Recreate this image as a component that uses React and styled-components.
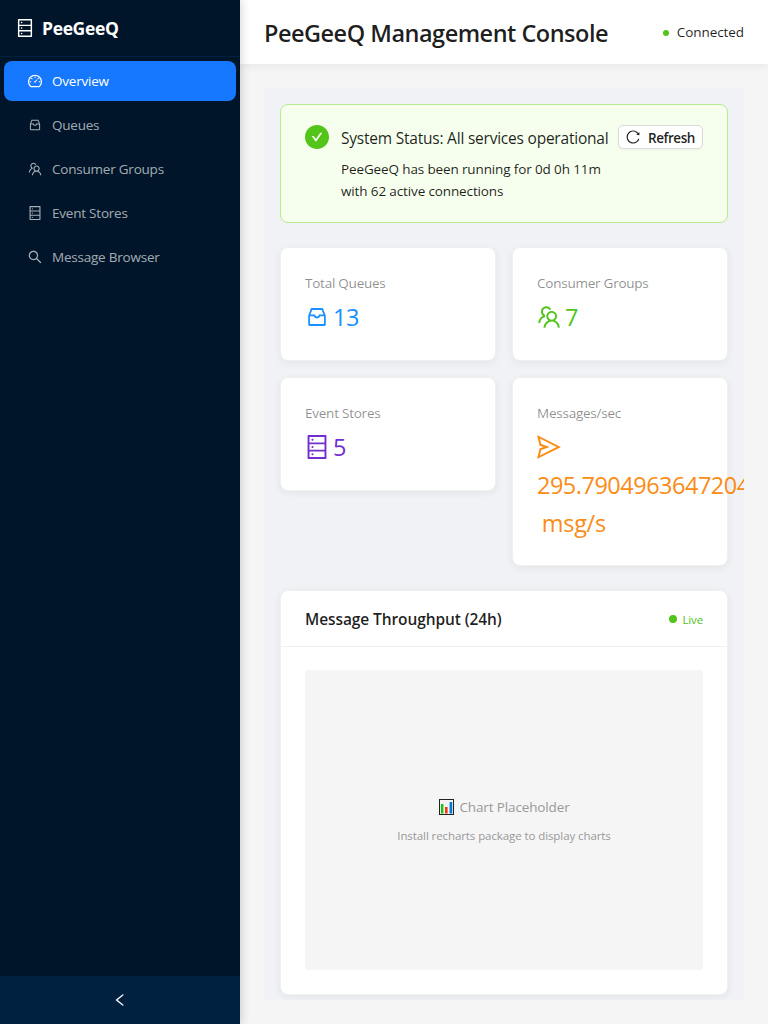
import React from "react";
import styled, { createGlobalStyle } from "styled-components";
import {
  AiOutlineDashboard,
  AiOutlineInbox,
  AiOutlineTeam,
  AiOutlineDatabase,
  AiOutlineSearch,
  AiOutlineSend,
  AiOutlineReload,
  AiOutlineLeft,
  AiFillCheckCircle,
} from "react-icons/ai";

const GlobalStyle = createGlobalStyle`
  *, *::before, *::after { box-sizing: border-box; }
  html, body { margin: 0; height: 100%; overflow: hidden; }
  body {
    font-family: "Segoe UI", "Open Sans", "Noto Sans", sans-serif;
    font-size: 13.5px;
    line-height: 22px;
    letter-spacing: -0.13px;
    color: rgba(0, 0, 0, 0.88);
    background: #f5f5f5;
  }
  svg { display: block; flex: none; }
`;

const Layout = styled.div`
  display: flex;
  width: 100%;
  height: 100vh;
  overflow: hidden;
`;

const Sider = styled.aside`
  display: flex;
  flex-direction: column;
  flex: 0 0 240px;
  background: #001529;
  box-shadow: 2px 0 8px rgba(0, 0, 0, 0.15);
  position: relative;
  z-index: 2;
`;

const Brand = styled.div`
  display: flex;
  align-items: center;
  gap: 8px;
  height: 57px;
  padding: 0 16px;
  border-bottom: 1px solid #002140;
  color: #fff;
  font-size: 17.5px;
  font-weight: 700;
  letter-spacing: -0.35px;
`;

const Menu = styled.nav`
  display: flex;
  flex: 1;
  flex-direction: column;
  gap: 4px;
  padding: 4px;
`;

const MenuItem = styled.a`
  display: flex;
  align-items: center;
  gap: 10px;
  height: 40px;
  padding: 0 24px;
  border-radius: 8px;
  color: ${(p) => (p.$active ? "#fff" : "rgba(255, 255, 255, 0.65)")};
  background: ${(p) => (p.$active ? "#1677ff" : "transparent")};
  letter-spacing: -0.22px;
`;

const Trigger = styled.div`
  display: flex;
  align-items: center;
  justify-content: center;
  height: 48px;
  background: #002140;
  color: #fff;
`;

const Main = styled.div`
  display: flex;
  flex: 1;
  flex-direction: column;
  min-width: 0;
`;

const Header = styled.header`
  display: flex;
  align-items: center;
  justify-content: space-between;
  flex: 0 0 64px;
  padding: 0 24px;
  background: #fff;
  box-shadow: 0 2px 8px rgba(0, 0, 0, 0.06);
  white-space: nowrap;
`;

const PageTitle = styled.h1`
  margin: 2px 0 0;
  font-size: 23.5px;
  line-height: 32px;
  font-weight: 600;
  letter-spacing: -0.5px;
`;

const Connection = styled.div`
  display: flex;
  align-items: center;
  gap: 8px;
  letter-spacing: -0.08px;
`;

const Dot = styled.span`
  width: ${(p) => p.$size}px;
  height: ${(p) => p.$size}px;
  margin-top: ${(p) => p.$drop || 0}px;
  border-radius: 50%;
  background: #52c41a;
`;

const Content = styled.main`
  flex: 1;
  min-height: 0;
  margin: 24px;
  padding: 16px;
  overflow: hidden;
  background: #f0f2f5;
`;

const Alert = styled.section`
  display: flex;
  height: 119px;
  padding: 20px 24px;
  border: 1px solid #b7eb8f;
  border-radius: 8px;
  background: #f6ffed;
`;

const StatusIcon = styled.span`
  flex: none;
  margin-right: 12px;
  color: #52c41a;
`;

const AlertBody = styled.div`
  flex: 1;
  min-width: 0;
  white-space: nowrap;
`;

const AlertTitle = styled.div`
  margin-bottom: 8px;
  padding-top: 1px;
  font-size: 15.5px;
  line-height: 24px;
  letter-spacing: -0.22px;
`;

const RefreshButton = styled.button`
  display: flex;
  align-items: center;
  gap: 8px;
  flex: none;
  width: 85px;
  height: 24px;
  padding: 2px 0 0 7px;
  border: 1px solid #d9d9d9;
  border-radius: 5px;
  background: #fff;
  box-shadow: 0 2px 0 rgba(0, 0, 0, 0.02);
  color: rgba(0, 0, 0, 0.88);
  font: 600 13.5px/20px "Segoe UI", "Open Sans", "Noto Sans", sans-serif;
  letter-spacing: -0.45px;

  svg { margin-top: -2px; }
`;

const Stats = styled.div`
  display: grid;
  grid-template-columns: 1fr 1fr;
  align-items: start;
  gap: 16px;
  margin: 24px 0;
`;

const Card = styled.section`
  min-width: 0;
  border: 1px solid #f0f0f0;
  border-radius: 8px;
  background: #fff;
  box-shadow: 0 2px 8px rgba(0, 0, 0, 0.06);
`;

const StatCard = styled(Card)`
  padding: 24px;
`;

const StatLabel = styled.div`
  margin-bottom: 4px;
  color: rgba(0, 0, 0, 0.45);
  letter-spacing: -0.24px;
`;

const StatValue = styled.div`
  display: flex;
  flex-wrap: wrap;
  align-items: center;
  column-gap: 4px;
  color: ${(p) => p.$color};
  font-size: 23.5px;
  line-height: 37.5px;
  letter-spacing: -0.5px;
  white-space: pre;

  svg { height: 38px; width: 24px; }
`;

const StatNumber = styled.span`
  padding-top: 1px;
  margin-bottom: -1px;
`;

const StatUnit = styled.span`
  margin-left: -1px;
  padding-top: 1px;
  margin-bottom: -1px;
  letter-spacing: -0.3px;
`;

const ChartHeader = styled.div`
  display: flex;
  align-items: center;
  justify-content: space-between;
  height: 56px;
  padding: 1px 24px 0;
  border-bottom: 1px solid #f0f0f0;
`;

const ChartTitle = styled.h2`
  margin: 0;
  font-size: 15.5px;
  font-weight: 600;
  letter-spacing: -0.1px;
`;

const Live = styled.div`
  display: flex;
  align-items: center;
  gap: 5px;
  padding-top: 1px;
  color: #52c41a;
  font-size: 11.5px;
  letter-spacing: -0.15px;
`;

const ChartBody = styled.div`
  padding: 23px 24px 24px;
`;

const Placeholder = styled.div`
  display: flex;
  flex-direction: column;
  align-items: center;
  justify-content: center;
  gap: 7px;
  height: 300px;
  padding-top: 3px;
  border-radius: 4px;
  background: #f5f5f5;
  color: #999;
`;

const PlaceholderTitle = styled.div`
  display: flex;
  align-items: center;
  gap: 5px;
  padding-left: 1px;
`;

const PlaceholderHint = styled.div`
  font-size: 11.5px;
  letter-spacing: -0.09px;
`;

/* Ant glyphs are drawn inside a 64-unit margin; this box trims it. */
const TRIM = "64 64 896 896";

function BarsIcon() {
  return (
    <svg width="15" height="16" viewBox="0 0 15 16" aria-hidden="true">
      <rect x="0.5" y="0.5" width="14" height="15" fill="#f2f2f2" stroke="#222" />
      <rect x="2" y="5" width="2.4" height="9.5" fill="#16c60c" />
      <rect x="6" y="8" width="2.6" height="6.5" fill="#f03a17" />
      <rect x="10.6" y="3" width="2.6" height="11.5" fill="#0078d7" />
    </svg>
  );
}

const MENU = [
  { label: "Overview", Icon: AiOutlineDashboard, box: TRIM, active: true },
  { label: "Queues", Icon: AiOutlineInbox, box: "0 0 1024 1024" },
  { label: "Consumer Groups", Icon: AiOutlineTeam, box: TRIM },
  { label: "Event Stores", Icon: AiOutlineDatabase, box: TRIM },
  { label: "Message Browser", Icon: AiOutlineSearch, box: TRIM },
];

const STATS = [
  { label: "Total Queues", Icon: AiOutlineInbox, box: "0 0 1024 1024", color: "#1890ff", value: "13" },
  { label: "Consumer Groups", Icon: AiOutlineTeam, box: TRIM, color: "#52c41a", value: "7" },
  { label: "Event Stores", Icon: AiOutlineDatabase, box: TRIM, color: "#722ed1", value: "5" },
  {
    label: "Messages/sec",
    Icon: AiOutlineSend,
    box: TRIM,
    color: "#fa8c16",
    value: "295.7904963647204",
    unit: " msg/s",
  },
];

export default function App() {
  return (
    <>
      <GlobalStyle />
      <Layout>
        <Sider>
          <Brand>
            <AiOutlineDatabase size={18} viewBox={TRIM} />
            PeeGeeQ
          </Brand>
          <Menu>
            {MENU.map(({ label, Icon, box, active }) => (
              <MenuItem key={label} $active={active}>
                <Icon size={14} viewBox={box} />
                {label}
              </MenuItem>
            ))}
          </Menu>
          <Trigger>
            <AiOutlineLeft size={14} viewBox={TRIM} />
          </Trigger>
        </Sider>
        <Main>
          <Header>
            <PageTitle>PeeGeeQ Management Console</PageTitle>
            <Connection>
              <Dot $size={6} $drop={2} />
              <span>Connected</span>
            </Connection>
          </Header>
          <Content>
            <Alert>
              <StatusIcon>
                <AiFillCheckCircle size={24} viewBox={TRIM} />
              </StatusIcon>
              <AlertBody>
                <AlertTitle>System Status: All services operational</AlertTitle>
                <div>
                  PeeGeeQ has been running for 0d 0h 11m
                  <br />
                  with 62 active connections
                </div>
              </AlertBody>
              <RefreshButton>
                <AiOutlineReload size={14} viewBox={TRIM} />
                Refresh
              </RefreshButton>
            </Alert>
            <Stats>
              {STATS.map(({ label, Icon, box, color, value, unit }) => (
                <StatCard key={label}>
                  <StatLabel>{label}</StatLabel>
                  <StatValue $color={color}>
                    <Icon viewBox={box} />
                    <StatNumber>{value}</StatNumber>
                    {unit && <StatUnit>{unit}</StatUnit>}
                  </StatValue>
                </StatCard>
              ))}
            </Stats>
            <Card>
              <ChartHeader>
                <ChartTitle>Message Throughput (24h)</ChartTitle>
                <Live>
                  <Dot $size={8} $drop={-2} />
                  <span>Live</span>
                </Live>
              </ChartHeader>
              <ChartBody>
                <Placeholder>
                  <PlaceholderTitle>
                    <BarsIcon />
                    <span>Chart Placeholder</span>
                  </PlaceholderTitle>
                  <PlaceholderHint>Install recharts package to display charts</PlaceholderHint>
                </Placeholder>
              </ChartBody>
            </Card>
          </Content>
        </Main>
      </Layout>
    </>
  );
}
